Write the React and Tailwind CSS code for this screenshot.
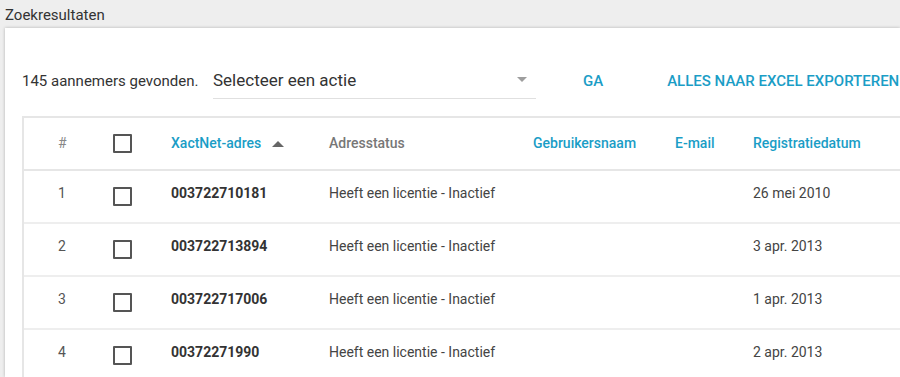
import React from 'react';

const rows = [
  { n: 1, id: '003722710181', status: 'Heeft een licentie - Inactief', date: '26 mei 2010' },
  { n: 2, id: '003722713894', status: 'Heeft een licentie - Inactief', date: '3 apr. 2013' },
  { n: 3, id: '003722717006', status: 'Heeft een licentie - Inactief', date: '1 apr. 2013' },
  { n: 4, id: '00372271990', status: 'Heeft een licentie - Inactief', date: '2 apr. 2013' },
];

const cols = 'grid grid-cols-[89px_58px_158px_204px_142px_78px_1fr]';

const Checkbox = () => (
  <span className="block w-[19px] h-[19px] border-2 border-[#555] rounded-[1px] bg-white" />
);

const App = () => {
  return (
    <div className="w-[900px] h-[377px] overflow-hidden bg-[#eeeeee] font-['Roboto',sans-serif] text-[#333]">
      <div className="h-[28px] pl-[5px] pt-[5px] text-[15px] leading-[20px] text-[#333]">Zoekresultaten</div>

      <div className="ml-[5px] bg-white shadow-[0_0_3px_rgba(0,0,0,0.25)] h-[349px] pl-[17px]">
        <div className="flex items-center h-[88px] pt-[18px]">
          <span className="text-[15px] text-[#333] w-[191px]">145 aannemers gevonden.</span>
          <div className="relative w-[323px] h-[36px] border-b border-[#e0e0e0] flex items-center">
            <span className="text-[17px] text-[#333]">Selecteer een actie</span>
            <span className="absolute right-[9px] top-[14px] w-0 h-0 border-l-[5px] border-r-[5px] border-t-[5px] border-l-transparent border-r-transparent border-t-[#9e9e9e]" />
          </div>
          <span className="ml-[47px] text-[15px] font-medium text-[#1a9dc6]">GA</span>
          <span className="ml-[64px] text-[15px] font-medium text-[#1a9dc6] whitespace-nowrap">ALLES NAAR EXCEL EXPORTEREN</span>
        </div>

        <div className="border-l-2 border-t-2 border-[#e6e6e6]">
          <div className={`${cols} h-[53px] items-center border-b-2 border-[#e6e6e6] text-[14px] font-medium`}>
            <span className="pl-[34px] text-[#888] font-normal">#</span>
            <span><Checkbox /></span>
            <span className="flex items-center text-[#1a9dc6]">
              XactNet-adres
              <span className="ml-[11px] w-0 h-0 border-l-[6px] border-r-[6px] border-b-[6px] border-l-transparent border-r-transparent border-b-[#666]" />
            </span>
            <span className="text-[#777]">Adresstatus</span>
            <span className="text-[#1a9dc6]">Gebruikersnaam</span>
            <span className="text-[#1a9dc6]">E-mail</span>
            <span className="text-[#1a9dc6]">Registratiedatum</span>
          </div>
          {rows.map((r) => (
            <div key={r.n} className={`${cols} h-[53px] items-center border-b-2 border-[#eeeeee] text-[14px]`}>
              <span className="pl-[34px] pb-[7px] text-[#555]">{r.n}</span>
              <span><Checkbox /></span>
              <span className="pb-[7px] font-bold text-[#333]">{r.id}</span>
              <span className="pb-[7px] text-[#444]">{r.status}</span>
              <span />
              <span />
              <span className="pb-[7px] text-[#444]">{r.date}</span>
            </div>
          ))}
        </div>
      </div>
    </div>
  );
};

export default App;
